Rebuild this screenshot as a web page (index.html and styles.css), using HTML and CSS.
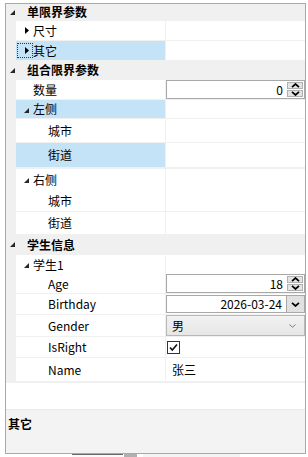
FILE: index.html
```html
<!DOCTYPE html>
<html lang="zh">
<head>
<meta charset="utf-8">
<link rel="stylesheet" href="styles.css">
</head>
<body>
<div class="frame">
  <div class="list">
    <div class="row cat h17">
      <span class="gutter"><svg class="tri-open" width="5" height="5" viewBox="0 0 5 5"><path d="M5 0V5H0Z" fill="#262626"/></svg></span>
      <span class="cat-label">单限界参数</span>
    </div>
    <div class="row h20">
      <span class="gutter"></span>
      <span class="name"><span class="exp"><svg width="4" height="7" viewBox="0 0 4 7"><path d="M0 0L4 3.5L0 7Z" fill="#000"/></svg></span>尺寸</span>
      <span class="value"></span>
    </div>
    <div class="row h20">
      <span class="gutter"></span>
      <span class="name selected"><span class="exp focus"><svg width="4" height="7" viewBox="0 0 4 7"><path d="M0 0L4 3.5L0 7Z" fill="#000"/></svg></span>其它</span>
      <span class="value"></span>
    </div>
    <div class="row cat h19">
      <span class="gutter"><svg class="tri-open" width="5" height="5" viewBox="0 0 5 5"><path d="M5 0V5H0Z" fill="#262626"/></svg></span>
      <span class="cat-label">组合限界参数</span>
    </div>
    <div class="row h20">
      <span class="gutter"></span>
      <span class="name d1">数量</span>
      <span class="value">
        <span class="spin"><span class="spin-text">0</span>
          <span class="spin-btns">
            <span class="sbtn"><svg width="9" height="5" viewBox="0 0 9 5"><path d="M1 4.2L4.5 1L8 4.2" stroke="#000" stroke-width="1.7" fill="none"/></svg></span>
            <span class="sbtn"><svg width="9" height="5" viewBox="0 0 9 5"><path d="M1 0.8L4.5 4L8 0.8" stroke="#000" stroke-width="1.7" fill="none"/></svg></span>
          </span>
        </span>
      </span>
    </div>
    <div class="row h19">
      <span class="gutter"></span>
      <span class="name selected"><span class="exp sub"><svg width="5" height="5" viewBox="0 0 5 5"><path d="M5 0V5H0Z" fill="#262626"/></svg></span>左侧</span>
      <span class="value"></span>
    </div>
    <div class="row h24">
      <span class="gutter"></span>
      <span class="name d2">城市</span>
      <span class="value"></span>
    </div>
    <div class="row h24 nob">
      <span class="gutter"></span>
      <span class="name d2 selected">街道</span>
      <span class="value"></span>
    </div>
    <div class="sep"></div>
    <div class="row h21 nob">
      <span class="gutter"></span>
      <span class="name"><span class="exp sub"><svg width="5" height="5" viewBox="0 0 5 5"><path d="M5 0V5H0Z" fill="#262626"/></svg></span>右侧</span>
      <span class="value"></span>
    </div>
    <div class="row h22">
      <span class="gutter"></span>
      <span class="name d2">城市</span>
      <span class="value"></span>
    </div>
    <div class="row h23">
      <span class="gutter"></span>
      <span class="name d2">街道</span>
      <span class="value"></span>
    </div>
    <div class="row cat h20">
      <span class="gutter"><svg class="tri-open" width="5" height="5" viewBox="0 0 5 5"><path d="M5 0V5H0Z" fill="#262626"/></svg></span>
      <span class="cat-label">学生信息</span>
    </div>
    <div class="row h19 nob">
      <span class="gutter"></span>
      <span class="name"><span class="exp sub"><svg width="5" height="5" viewBox="0 0 5 5"><path d="M5 0V5H0Z" fill="#262626"/></svg></span>学生1</span>
      <span class="value"></span>
    </div>
    <div class="row h20">
      <span class="gutter"></span>
      <span class="name d2">Age</span>
      <span class="value">
        <span class="spin"><span class="spin-text">18</span>
          <span class="spin-btns">
            <span class="sbtn"><svg width="9" height="5" viewBox="0 0 9 5"><path d="M1 4.2L4.5 1L8 4.2" stroke="#000" stroke-width="1.7" fill="none"/></svg></span>
            <span class="sbtn"><svg width="9" height="5" viewBox="0 0 9 5"><path d="M1 0.8L4.5 4L8 0.8" stroke="#000" stroke-width="1.7" fill="none"/></svg></span>
          </span>
        </span>
      </span>
    </div>
    <div class="row h21">
      <span class="gutter"></span>
      <span class="name d2">Birthday</span>
      <span class="value inset">
        <span class="date"><span class="spin-text">2026-03-24</span>
          <span class="date-btn"><svg width="9" height="5" viewBox="0 0 9 5"><path d="M1 0.8L4.5 4L8 0.8" stroke="#000" stroke-width="1.7" fill="none"/></svg></span>
        </span>
      </span>
    </div>
    <div class="row h22">
      <span class="gutter"></span>
      <span class="name d2">Gender</span>
      <span class="value">
        <span class="combo"><span class="combo-text">男</span>
          <svg class="combo-arrow" width="7" height="4" viewBox="0 0 7 4"><path d="M0.5 0.5L3.5 3.3L6.5 0.5" stroke="#7a7a7a" stroke-width="1" fill="none"/></svg>
        </span>
      </span>
    </div>
    <div class="row h21">
      <span class="gutter"></span>
      <span class="name d2">IsRight</span>
      <span class="value">
        <span class="check"><svg width="11" height="11" viewBox="0 0 11 11"><path d="M2 5.5L4.3 8L9 2.5" stroke="#111" stroke-width="1.6" fill="none"/></svg></span>
      </span>
    </div>
    <div class="row h23 nob">
      <span class="gutter"></span>
      <span class="name d2">Name</span>
      <span class="value"><span class="val-text">张三</span></span>
    </div>
    <div class="sep"></div>
    <div class="fill"></div>
  </div>
  <div class="desc"><span class="desc-title">其它</span></div>
</div>
<div class="below">
  <span class="b1"></span>
  <span class="b2"></span>
  <span class="b3"></span>
</div>
</body>
</html>
```

FILE: styles.css
```css
* { box-sizing: border-box; }
html, body { margin: 0; padding: 0; }
body {
  background: #fff;
  font-family: "Noto Sans CJK SC", "Microsoft YaHei", sans-serif;
  font-size: 12px;
  color: #000;
  width: 308px;
  height: 457px;
  overflow: hidden;
}
.frame {
  margin: 3px 0 0 5px;
  width: 301px;
  height: 451px;
  border: 1px solid #a9a9a9;
  display: flex;
  flex-direction: column;
  background: #fff;
}
.list { flex: 1; display: flex; flex-direction: column; }
.row {
  display: flex;
  flex: none;
  border-bottom: 1px solid #f0f0f0;
}
.row.nob { border-bottom: none; }
.h17 { height: 17px; }
.h19 { height: 19px; }
.h20 { height: 20px; }
.h21 { height: 21px; }
.h22 { height: 22px; }
.h23 { height: 23px; }
.h24 { height: 24px; }
.sep { height: 2px; background: #f0f0f0; flex: none; }
.fill { flex: 1; }
.cat { background: #f0f0f0; align-items: center; }
.gutter {
  width: 10px;
  flex: none;
  background: #f0f0f0;
  display: flex;
  align-items: center;
  justify-content: center;
  align-self: stretch;
}
.tri-open { display: block; margin-left: 2px; }
.cat-label {
  padding-left: 11px;
  font-weight: bold;
  line-height: 16px;
}
.name {
  width: 149px;
  flex: none;
  display: flex;
  align-items: center;
  padding-left: 1px;
  line-height: 16px;
}
.name.d1 { padding-left: 17px; }
.name.d2 { padding-left: 32px; }
.selected { background: #c4e3f7; }
.exp {
  width: 16px;
  height: 15px;
  display: flex;
  align-items: center;
  justify-content: flex-end;
  padding-right: 3px;
  border: 1px dotted transparent;
}
.exp.focus { border-color: #3a3a3a; }
.exp.sub { padding-right: 3px; padding-top: 2px; }
.exp svg { display: block; }
.value {
  flex: 1;
  border-left: 1px solid #f0f0f0;
  display: flex;
  align-items: stretch;
}
.value.inset { padding-top: 1px; padding-bottom: 1px; }
.spin, .date {
  flex: 1;
  display: flex;
  align-items: center;
  border: 1px solid #a8a8a8;
  background: #fff;
  padding: 1px 1px 1px 0;
}
.spin-text {
  flex: 1;
  text-align: right;
  padding-right: 4px;
  line-height: 16px;
}
.spin-btns {
  width: 16px;
  align-self: stretch;
  display: flex;
  flex-direction: column;
  gap: 1px;
}
.sbtn {
  flex: 1;
  display: flex;
  align-items: center;
  justify-content: center;
  background: #e4e4e4;
  border: 1px solid #b0b0b0;
}
.sbtn svg { display: block; }
.date { padding: 0; }
.date-btn {
  width: 18px;
  align-self: stretch;
  display: flex;
  align-items: center;
  justify-content: center;
  background: #e1e1e1;
  border-left: 1px solid #a8a8a8;
}
.date-btn svg { display: block; }
.combo {
  flex: 1;
  display: flex;
  align-items: center;
  border: 1px solid #b8b8b8;
  background: linear-gradient(#f2f2f2, #e6e6e6);
  padding: 0 8px 0 5px;
}
.combo-text { flex: 1; line-height: 16px; }
.combo-arrow { display: block; }
.check {
  align-self: center;
  width: 13px;
  height: 13px;
  margin-left: 1px;
  border: 1px solid #333;
  background: #fff;
  display: flex;
  align-items: center;
  justify-content: center;
}
.check svg { display: block; }
.val-text {
  align-self: center;
  padding-left: 6px;
  line-height: 16px;
}
.desc {
  flex: none;
  height: 44px;
  background: #f3f3f3;
  border-top: 1px solid #e9e9e9;
  padding: 5px 0 0 2px;
}
.desc-title { font-weight: bold; line-height: 16px; }
.below {
  display: flex;
  height: 3px;
  padding-left: 72px;
}
.b1 { width: 51px; border-top: 1px solid #6a6a6a; background: #fafafa; }
.b2 { width: 13px; margin-left: 1px; background: #b0b0b0; }
.b3 { width: 97px; margin-left: 6px; background: #f4f4f4; }
```
